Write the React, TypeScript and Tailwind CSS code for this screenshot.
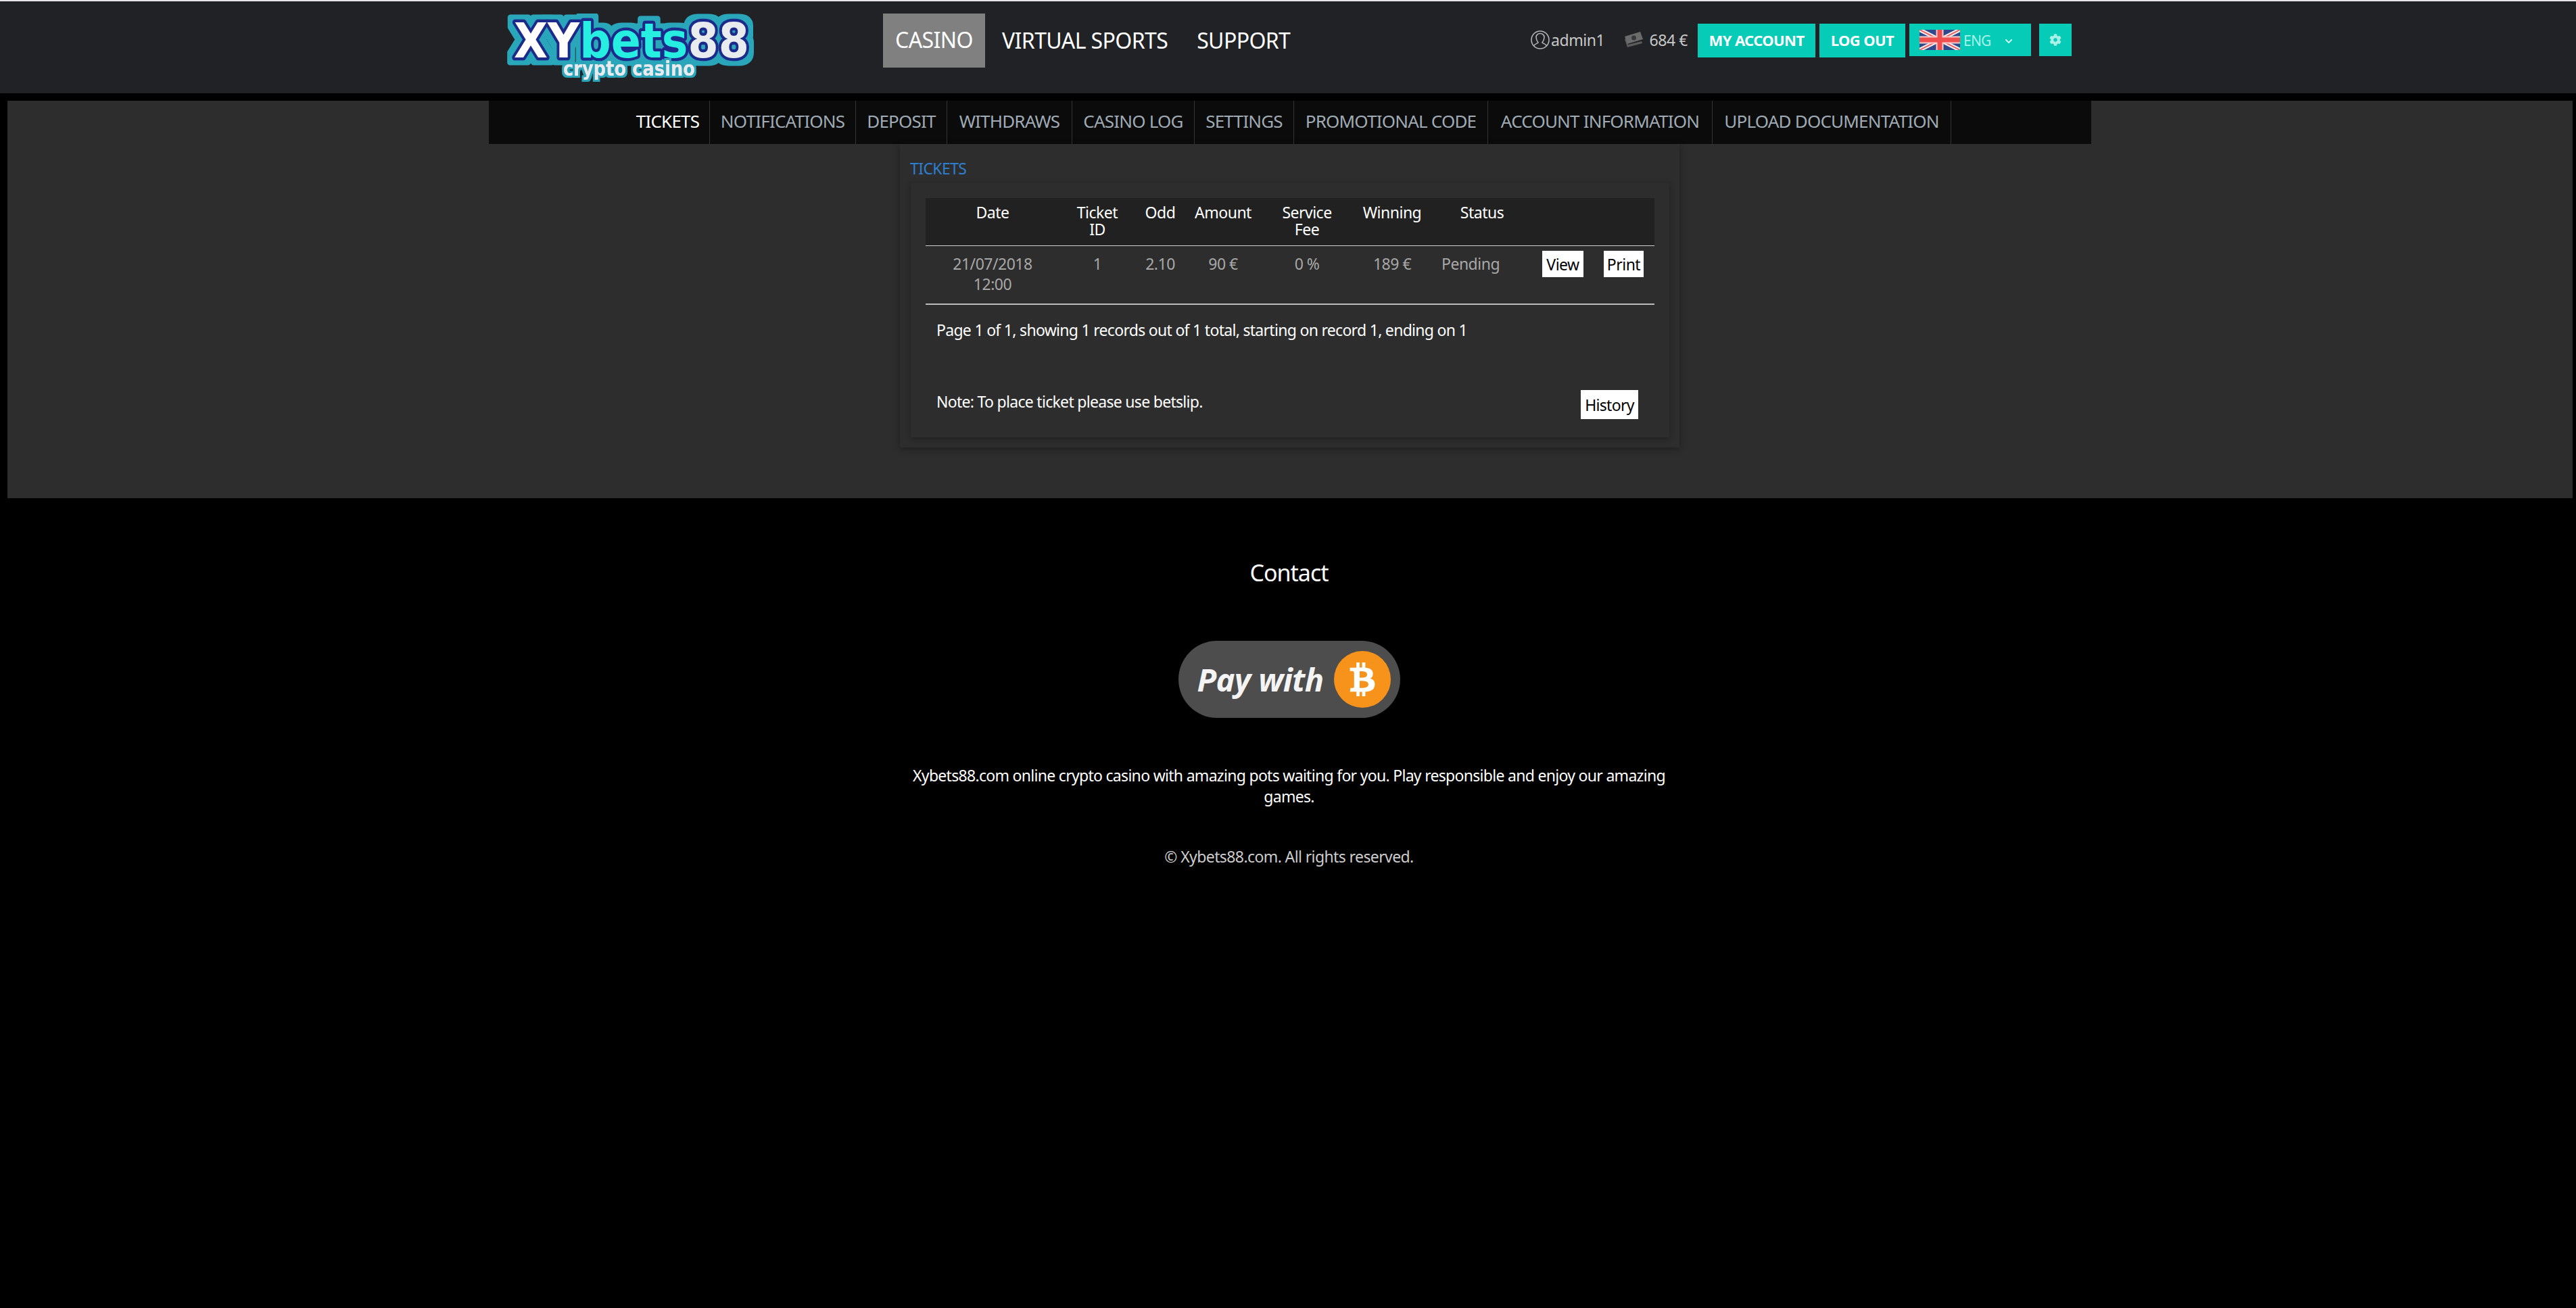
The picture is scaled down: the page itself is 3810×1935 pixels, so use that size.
import { FaBtc, FaChevronDown, FaCog } from "react-icons/fa";

const subNav = [
  { label: "TICKETS", width: "w-[124px]" },
  { label: "NOTIFICATIONS", width: "w-[216px]" },
  { label: "DEPOSIT", width: "w-[135px]" },
  { label: "WITHDRAWS", width: "w-[185px]" },
  { label: "CASINO LOG", width: "w-[181px]" },
  { label: "SETTINGS", width: "w-[147px]" },
  { label: "PROMOTIONAL CODE", width: "w-[287px]" },
  { label: "ACCOUNT INFORMATION", width: "w-[332px]" },
  { label: "UPLOAD DOCUMENTATION", width: "w-[353px]" },
];

const gridCols = "grid grid-cols-[198px_112px_74px_112px_136px_116px_150px_89px_90px]";

const Logo = () => (
  <svg width="372" height="104" viewBox="0 0 372 104" className="shrink-0">
    <defs>
      {/* teal halo round the lettering */}
      <filter id="halo" x="-10%" y="-30%" width="120%" height="160%">
        <feMorphology in="SourceAlpha" operator="dilate" radius="7" result="fat" />
        <feFlood floodColor="#2aa6bb" />
        <feComposite in2="fat" operator="in" result="teal" />
        <feMerge>
          <feMergeNode in="teal" />
          <feMergeNode in="SourceGraphic" />
        </feMerge>
      </filter>
      <filter id="haloSmall" x="-10%" y="-30%" width="120%" height="160%">
        <feMorphology in="SourceAlpha" operator="dilate" radius="3" result="fat" />
        <feFlood floodColor="#2aa6bb" />
        <feComposite in2="fat" operator="in" result="teal" />
        <feMerge>
          <feMergeNode in="teal" />
          <feMergeNode in="SourceGraphic" />
        </feMerge>
      </filter>
    </defs>
    <g fontFamily="'DejaVu Sans', sans-serif" fontWeight="700" strokeLinejoin="round">
      <text
        x="14"
        y="65"
        fontSize="71"
        textLength="348"
        lengthAdjust="spacingAndGlyphs"
        stroke="#1f2c8c"
        strokeWidth="9"
        paintOrder="stroke"
        filter="url(#halo)"
      >
        <tspan fill="#ffffff">XY</tspan>
        <tspan fill="#25eee0">bets</tspan>
        <tspan fill="#e9ecef">88</tspan>
      </text>
      <text x="87" y="92" fontSize="30" textLength="195" lengthAdjust="spacingAndGlyphs" fill="#e9ecef" filter="url(#haloSmall)">
        crypto casino
      </text>
    </g>
  </svg>
);

const UserIcon = () => (
  <svg width="30" height="30" viewBox="0 0 30 30" fill="none" stroke="#b5b5b5" strokeWidth="1.6" className="shrink-0">
    <circle cx="15" cy="15" r="13" />
    <path d="M5.5 24c1-3 5-3.500 6.500-5-2.500-3-3-5-3-8 0-3 2.500-5.500 6-5.500s6 2.500 6 5.500c0 3-.5 5-3 8 1.500 1.500 5.500 2 6.500 5" />
  </svg>
);

const MoneyIcon = () => (
  <svg width="30" height="26" viewBox="0 0 30 26" className="shrink-0">
    <path d="M2 12l4 12 22-6-1-3-20 5-3-9z" fill="#5b5b5b" />
    <path d="M2 8l23-7 4 11-23 7z" fill="#6b6b6b" />
    <circle cx="15.500" cy="10" r="3.500" fill="#3a3a3a" />
  </svg>
);

const Flag = () => (
  <svg width="60" height="30" viewBox="0 0 60 30" className="shrink-0">
    <rect width="60" height="30" fill="#2f4a8c" />
    <path d="M0 0L60 30M60 0L0 30" stroke="#f2f2f2" strokeWidth="6" />
    <path d="M0 0L60 30M60 0L0 30" stroke="#ef5a5a" strokeWidth="2" />
    <path d="M30 0V30M0 15H60" stroke="#f7c9c9" strokeWidth="11" />
    <path d="M30 0V30M0 15H60" stroke="#ef4f4f" strokeWidth="7" />
  </svg>
);

const App = () => {
  return (
    <div className="min-h-screen bg-black font-['Noto_Sans',sans-serif] text-white">
      {/* Top bar */}
      <header className="flex h-[138px] items-start border-t-2 border-[#e6e6e6] bg-[#212226] pl-[746px]">
        <div className="pt-[18px]">
          <Logo />
        </div>
        <nav className="ml-[188px] mt-[18px] flex items-center text-[32px] leading-[78px] tracking-[-0.6px]">
          <a className="w-[151px] bg-[#808080] pb-[2px] text-center">CASINO</a>
          <a className="ml-[25px]">VIRTUAL SPORTS</a>
          <a className="ml-[43px]">SUPPORT</a>
        </nav>
        <div className="ml-auto mr-[746px] mt-[33px] flex items-start">
          <div className="flex h-[48px] items-center text-[23px] tracking-[-0.4px] text-[#c8c8c8]">
            <UserIcon />
            <span className="ml-[1px]">admin1</span>
            <span className="ml-[28px]"><MoneyIcon /></span>
            <span className="ml-[8px] whitespace-nowrap">684 €</span>
          </div>
          <a className="ml-[15px] flex h-[50px] w-[174px] items-center justify-center bg-[#05cbb7] pb-[2px] text-[22px] font-bold tracking-[-0.6px]">MY ACCOUNT</a>
          <a className="ml-[6px] flex h-[50px] w-[127px] items-center justify-center bg-[#05cbb7] pb-[2px] text-[22px] font-bold tracking-[-0.6px]">LOG OUT</a>
          <div className="ml-[6px] flex h-[48px] w-[180px] items-center bg-[#05cbb7] pl-[15px] text-[#a9f2e8]">
            <Flag />
            <span className="ml-[5px] mt-[3px] text-[21px] tracking-[-0.8px]">ENG</span>
            <FaChevronDown className="ml-[20px] mt-[3px] text-[12px] text-[#d5f8f3]" />
          </div>
          <div className="ml-[12px] flex h-[48px] w-[48px] items-center justify-center bg-[#05cbb7]">
            <FaCog className="text-[18px] text-[#a9f2e8]" />
          </div>
        </div>
      </header>

      {/* Account area */}
      <main className="ml-[11px] mr-[5px] mt-[11px] h-[588px] bg-[#2d2d2d]">
        <div className="mx-auto flex h-[64px] w-[2370px] justify-center bg-[#0b0b0b] pr-[4px]">
          {subNav.map((item, i) => (
            <a
              key={item.label}
              className={`flex items-center justify-center whitespace-nowrap border-r border-[#333333] pb-[3px] text-[26px] tracking-[-0.8px] ${item.width} ${i === 0 ? "text-white" : "text-[#a0abb6]"}`}
            >
              {item.label}
            </a>
          ))}
        </div>

        <section className="ml-[1320px] h-[449px] w-[1153px] bg-[#2d2d2d] px-[16px] shadow-[0_2px_10px_rgba(0,0,0,0.35)]">
          <h2 className="-ml-[1px] pt-[21px] text-[23px] leading-[31px] tracking-[-0.6px] text-[#2f7fd1]">TICKETS</h2>
          <div className="relative mt-[5px] h-[377px] w-[1122px] bg-[#2d2d2d] px-[22px] pt-[23px] shadow-[0_2px_8px_rgba(0,0,0,0.3)]">
            <div className={`${gridCols} h-[71px] border-b border-[#cfcfcf] bg-[#212121] pt-[9px] text-center text-[23px] leading-[25px] tracking-[-0.5px]`}>
              <div>Date</div>
              <div>Ticket<br />ID</div>
              <div>Odd</div>
              <div>Amount</div>
              <div>Service<br />Fee</div>
              <div>Winning</div>
              <div>Status</div>
              <div />
              <div />
            </div>
            <div className={`${gridCols} h-[87px] border-b-2 border-[#bdbdbd] pt-[7px] text-center text-[23px] leading-[30px] tracking-[-0.5px] text-[#a8a8a8]`}>
              <div className="pt-[4px]">21/07/2018<br />12:00</div>
              <div className="pt-[4px]">1</div>
              <div className="pt-[4px]">2.10</div>
              <div className="pt-[4px]">90 €</div>
              <div className="pt-[4px]">0 %</div>
              <div className="pt-[4px]">189 €</div>
              <div className="pl-[15px] pt-[4px] text-left">Pending</div>
              <div className="pl-[14px]">
                <a className="flex h-[39px] w-[61px] items-center justify-center bg-white text-black">View</a>
              </div>
              <div className="pl-[16px]">
                <a className="flex h-[39px] w-[59px] items-center justify-center bg-white text-black">Print</a>
              </div>
            </div>
            <p className="ml-[16px] mt-[23px] text-[23px] leading-[28px] tracking-[-0.7px]">
              Page 1 of 1, showing 1 records out of 1 total, starting on record 1, ending on 1
            </p>
            <div className="mt-[80px] flex items-start justify-between pl-[16px] text-[23px] leading-[28px] tracking-[-0.7px]">
              <p className="-mt-[2px]">Note: To place ticket please use betslip.</p>
              <a className="mr-[24px] -mt-[5px] flex h-[43px] w-[85px] items-center justify-center bg-white text-black">History</a>
            </div>
          </div>
        </section>
      </main>

      {/* Footer */}
      <footer className="flex flex-col items-center pl-[3px] text-center">
        <h3 className="mt-[87px] text-[34px] leading-[46px] tracking-[-1px]">Contact</h3>
        <div className="mt-[78px] flex h-[114px] w-[328px] items-center rounded-full bg-[#4d4d4d] pl-[28px]">
          <span className="text-[47px] font-bold italic leading-none tracking-[-0.6px] text-[#f4f4f4]">Pay with</span>
          <span className="ml-[15px] flex h-[84px] w-[84px] shrink-0 items-center justify-center rounded-full bg-[#f7931a]">
            <FaBtc className="text-[50px] text-white" />
          </span>
        </div>
        <p className="mt-[70px] w-[1150px] text-[23px] leading-[31px] tracking-[-0.7px]">
          Xybets88.com online crypto casino with amazing pots waiting for you. Play responsible and enjoy our amazing games.
        </p>
        <p className="mt-[58px] text-[23px] leading-[31px] tracking-[-0.6px] text-[#cccccc]">© Xybets88.com. All rights reserved.</p>
      </footer>
    </div>
  );
};

export default App;
